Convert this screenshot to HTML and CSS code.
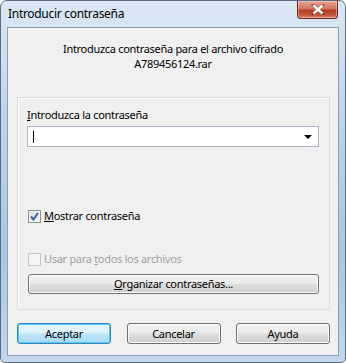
FILE: index.html
```html
<!DOCTYPE html>
<html lang="es">
<head>
    <meta charset="UTF-8">
    <title>Introducir contraseña</title>
    <link rel="stylesheet" href="styles.css">
</head>
<body>
    <div class="window">
        <div class="titlebar">
            <div class="title">Introducir contraseña</div>
            <div class="close">
                <svg width="14" height="11" viewBox="0 0 14 11">
                    <path d="M2 1 L12 10 M12 1 L2 10" stroke="#7a2a1e" stroke-width="3.4" stroke-linecap="square" opacity="0.5"/>
                    <path d="M2.5 1.5 L11.5 9.5 M11.5 1.5 L2.5 9.5" stroke="#fff" stroke-width="2.4"/>
                </svg>
            </div>
        </div>

        <div class="client">
            <div class="header">
                <div>Introduzca contraseña para el archivo cifrado</div>
                <div>A789456124.rar</div>
            </div>

            <div class="group">
                <div class="label"><u>I</u>ntroduzca la contraseña</div>
                <div class="combo">
                    <span class="caret"></span>
                    <span class="arrow"></span>
                </div>

                <div class="check checked">
                    <span class="box">
                        <svg width="9" height="9" viewBox="0 0 9 9">
                            <path d="M1 4.5 L3.5 7.5 L8 1" fill="none" stroke="#3a63a8" stroke-width="2"/>
                        </svg>
                    </span>
                    <span><u>M</u>ostrar contraseña</span>
                </div>

                <div class="check disabled">
                    <span class="box"></span>
                    <span>Usar para <u>t</u>odos los archivos</span>
                </div>

                <div class="btn wide"><u>O</u>rganizar contraseñas...</div>
            </div>

            <div class="actions">
                <div class="btn default">Aceptar</div>
                <div class="btn">Cancelar</div>
                <div class="btn">Ayuda</div>
            </div>
        </div>
    </div>
</body>
</html>
```

FILE: styles.css
```css
body{
    margin: 0;
    font-family: 'Noto Sans', 'Open Sans', sans-serif;
    font-size: 11px;
    letter-spacing: -0.3px;
    color: #000;
    background: #fff;
}
.window{
    width: 346px;
    height: 363px;
    box-sizing: border-box;
    display: flex;
    flex-direction: column;
    border: 1px solid #5a6d82;
    border-radius: 7px 7px 5px 5px;
    background: linear-gradient(180deg, #dbe8f4 0%, #c0d5ea 30%, #aac6e2 70%, #c2d7ec 100%);
    overflow: hidden;
}
.titlebar{
    height: 26px;
    display: flex;
    justify-content: space-between;
    align-items: flex-start;
    flex-shrink: 0;
}
.title{
    font-size: 12px;
    padding: 5px 0 0 7px;
    line-height: 16px;
}
.close{
    width: 41px;
    height: 18px;
    margin-right: 7px;
    box-sizing: border-box;
    border: 1px solid #6e2a22;
    border-top: none;
    border-radius: 0 0 4px 4px;
    background: linear-gradient(180deg, #e7a393 0%, #d37763 45%, #b63c23 55%, #c45a3f 85%, #e08a6c 100%);
    display: flex;
    align-items: center;
    justify-content: center;
    box-shadow: inset 0 0 0 1px rgba(255,255,255,0.35);
}
.client{
    flex: 1;
    margin: 0 6px 6px 6px;
    border: 1px solid #8a9eb4;
    background: #f0f0f0;
    display: flex;
    flex-direction: column;
}
.header{
    text-align: center;
    line-height: 15px;
    padding-top: 13px;
    height: 55px;
    box-sizing: border-box;
}
.group{
    margin: 14px 8px 0 9px;
    height: 213px;
    box-sizing: border-box;
    border: 1px solid #dcdcdc;
    box-shadow: inset 1px 1px 0 #fbfbfb;
    padding: 10px 10px 0 9px;
    display: flex;
    flex-direction: column;
}
.label{
    line-height: 14px;
}
.combo{
    margin-top: 4px;
    height: 21px;
    box-sizing: border-box;
    border: 1px solid #abb9c7;
    background: #fff;
    position: relative;
}
.caret{
    position: absolute;
    left: 5px;
    top: 4px;
    width: 1px;
    height: 12px;
    background: #000;
}
.arrow{
    position: absolute;
    right: 6px;
    top: 8px;
    border-left: 4px solid transparent;
    border-right: 4px solid transparent;
    border-top: 4px solid #000;
}
.check{
    display: flex;
    align-items: center;
    gap: 3px;
    line-height: 14px;
    margin-left: 1px;
}
.check.checked{
    margin-top: 62px;
}
.check.disabled{
    margin-top: 29px;
    color: #a0a0a0;
}
.box{
    width: 13px;
    height: 13px;
    box-sizing: border-box;
    border: 1px solid #8e8f8f;
    background: linear-gradient(135deg, #dcdcdc 0%, #f6f6f6 100%);
    box-shadow: inset 0 0 0 1px #f4f4f4;
    display: flex;
    align-items: center;
    justify-content: center;
}
.disabled .box{
    border-color: #c6c6c6;
    background: #f4f4f4;
}
.btn{
    height: 21px;
    box-sizing: border-box;
    border: 1px solid #707070;
    border-radius: 3px;
    background: linear-gradient(180deg, #f2f2f2 0%, #ebebeb 48%, #dddddd 52%, #cfcfcf 100%);
    box-shadow: inset 0 0 0 1px #fcfcfc;
    text-align: center;
    line-height: 19px;
}
.btn.wide{
    margin-top: 8px;
    height: 20px;
    line-height: 18px;
    margin-left: 1px;
}
.btn.default{
    border-color: #3c7fb1;
    background: linear-gradient(180deg, #eaf6fd 0%, #d9f0fc 48%, #bee6fd 52%, #a7d9f5 100%);
    box-shadow: inset 0 0 0 1px #48d1fd;
}
.actions{
    display: flex;
    justify-content: space-between;
    margin: 13px 8px 0 9px;
}
.actions .btn{
    width: 94px;
}
```
